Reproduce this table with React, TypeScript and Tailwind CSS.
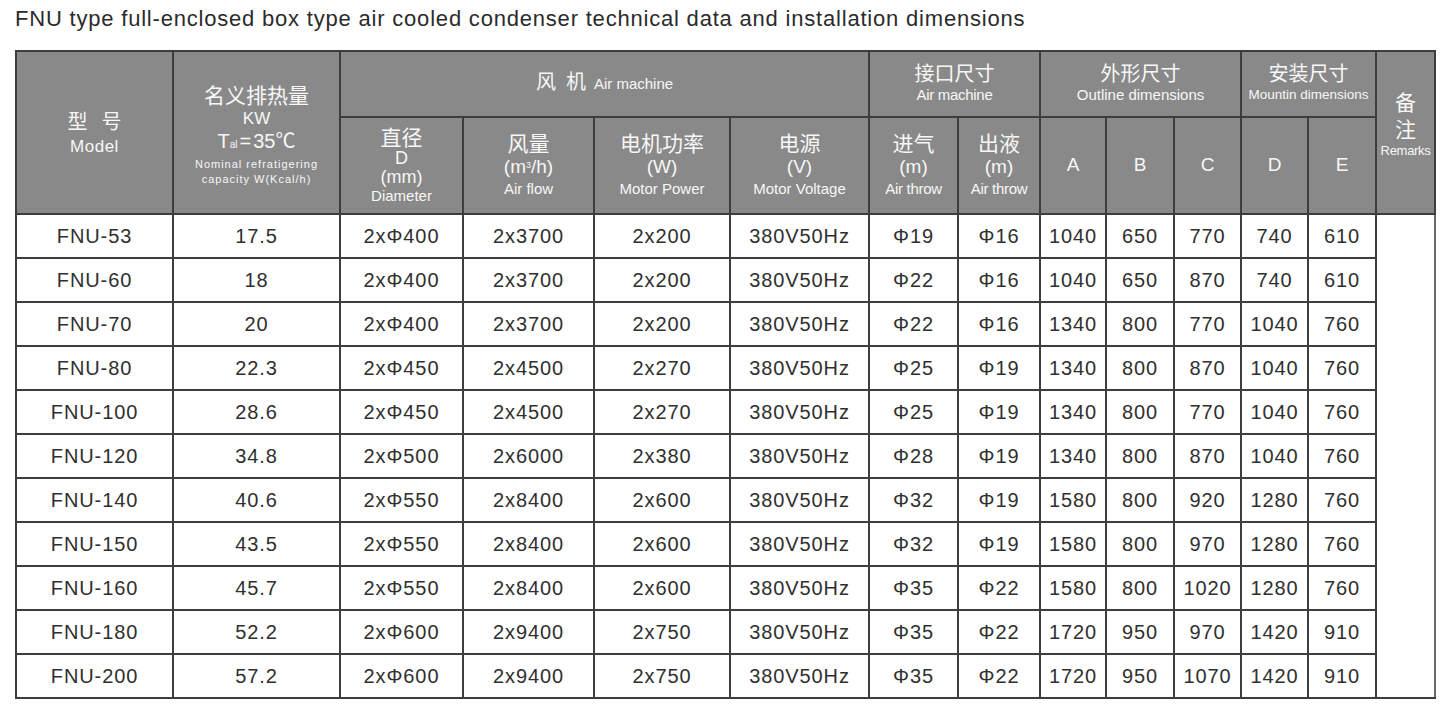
const ROWS: string[][] = [
  ["FNU-53", "17.5", "2xΦ400", "2x3700", "2x200", "380V50Hz", "Φ19", "Φ16", "1040", "650", "770", "740", "610"],
  ["FNU-60", "18", "2xΦ400", "2x3700", "2x200", "380V50Hz", "Φ22", "Φ16", "1040", "650", "870", "740", "610"],
  ["FNU-70", "20", "2xΦ400", "2x3700", "2x200", "380V50Hz", "Φ22", "Φ16", "1340", "800", "770", "1040", "760"],
  ["FNU-80", "22.3", "2xΦ450", "2x4500", "2x270", "380V50Hz", "Φ25", "Φ19", "1340", "800", "870", "1040", "760"],
  ["FNU-100", "28.6", "2xΦ450", "2x4500", "2x270", "380V50Hz", "Φ25", "Φ19", "1340", "800", "770", "1040", "760"],
  ["FNU-120", "34.8", "2xΦ500", "2x6000", "2x380", "380V50Hz", "Φ28", "Φ19", "1340", "800", "870", "1040", "760"],
  ["FNU-140", "40.6", "2xΦ550", "2x8400", "2x600", "380V50Hz", "Φ32", "Φ19", "1580", "800", "920", "1280", "760"],
  ["FNU-150", "43.5", "2xΦ550", "2x8400", "2x600", "380V50Hz", "Φ32", "Φ19", "1580", "800", "970", "1280", "760"],
  ["FNU-160", "45.7", "2xΦ550", "2x8400", "2x600", "380V50Hz", "Φ35", "Φ22", "1580", "800", "1020", "1280", "760"],
  ["FNU-180", "52.2", "2xΦ600", "2x9400", "2x750", "380V50Hz", "Φ35", "Φ22", "1720", "950", "970", "1420", "910"],
  ["FNU-200", "57.2", "2xΦ600", "2x9400", "2x750", "380V50Hz", "Φ35", "Φ22", "1720", "950", "1070", "1420", "910"],
];

const COLS = [157, 167, 123, 131, 136, 139, 89, 82, 66, 68, 67, 67, 68, 59];

const th = "border-2 border-[#3d3d3d] bg-[#898989] text-[#f7f7f7] font-normal p-0 align-middle text-center";
const td = "border-2 border-[#3d3d3d] h-[44px] p-0 text-center align-middle text-[20px] tracking-[0.9px] text-[#2f2f2f]";
const cjk = "[font-family:'Liberation_Sans','Noto_Sans_CJK_SC',sans-serif]";

function Cn({ children, size = "text-[21px]", lh = "leading-[24px]" }: { children: React.ReactNode; size?: string; lh?: string }) {
  return <div className={`${size} ${lh}`}>{children}</div>;
}

export default function App() {
  return (
    <div className={`min-h-[713px] w-[1454px] bg-white pl-[15px] pt-[8px] ${cjk}`}>
      <div className="text-[22px] leading-[22px] text-[#2b2b2b] tracking-[0.8px]">
        FNU type full-enclosed box type air cooled condenser technical data and installation dimensions
      </div>

      <table className="mt-[20px] w-[1419px] table-fixed border-collapse">
        <colgroup>
          {COLS.map((w, i) => (
            <col key={i} style={{ width: w }} />
          ))}
        </colgroup>
        <thead>
          <tr className="h-[66px]">
            <th rowSpan={2} className={th}>
              <div className="flex justify-center gap-[14px] text-[20px] leading-[29px]">
                <span>型</span>
                <span>号</span>
              </div>
              <div className="text-[17px] leading-[20px] tracking-[0.5px]">Model</div>
            </th>
            <th rowSpan={2} className={th}>
              <div className="pt-[4px]">
                <div className="text-[21px] leading-[26px]">名义排热量</div>
                <div className="text-[17px] leading-[20px]">KW</div>
                <div className="text-[20px] leading-[25px]">
                  T<span className="text-[10px]">al</span>
                  <span className="mx-[2px]">=</span>35℃
                </div>
                <div className="text-[11px] leading-[15px] tracking-[1px]">Nominal refratigering</div>
                <div className="text-[11px] leading-[15px] tracking-[1px]">capacity W(Kcal/h)</div>
              </div>
            </th>
            <th colSpan={4} className={th}>
              <div className="flex items-baseline justify-center gap-[8px] pb-[4px]">
                <span className="flex gap-[10px] text-[20px]">
                  <span>风</span>
                  <span>机</span>
                </span>
                <span className="text-[15px]">Air machine</span>
              </div>
            </th>
            <th colSpan={2} className={th}>
              <Cn size="text-[20px]" lh="leading-[22px]">接口尺寸</Cn>
              <div className="text-[15px] leading-[20px] tracking-[-0.3px]">Air machine</div>
            </th>
            <th colSpan={3} className={th}>
              <Cn size="text-[20px]" lh="leading-[22px]">外形尺寸</Cn>
              <div className="text-[15px] leading-[20px]">Outline dimensions</div>
            </th>
            <th colSpan={2} className={th}>
              <Cn size="text-[20px]" lh="leading-[22px]">安装尺寸</Cn>
              <div className="text-[13.5px] leading-[20px]">Mountin dimensions</div>
            </th>
            <th rowSpan={2} className={th}>
              <div className="pb-[18px]">
                <Cn size="text-[21px]" lh="leading-[31px]">备</Cn>
                <Cn size="text-[21px]" lh="leading-[24px]">注</Cn>
                <div className="text-[13px] leading-[18px] tracking-[-0.3px]">Remarks</div>
              </div>
            </th>
          </tr>
          <tr className="h-[97px]">
            <th className={th}>
              <Cn lh="leading-[22px]">直径</Cn>
              <div className="text-[18px] leading-[19px]">D</div>
              <div className="text-[18px] leading-[19px]">(mm)</div>
              <div className="text-[15px] leading-[18px]">Diameter</div>
            </th>
            <th className={th}>
              <Cn>风量</Cn>
              <div className="text-[19px] leading-[22px]">
                (m<sup className="text-[9px]">3</sup>/h)
              </div>
              <div className="text-[15px] leading-[22px]">Air flow</div>
            </th>
            <th className={th}>
              <Cn>电机功率</Cn>
              <div className="text-[19px] leading-[22px]">(W)</div>
              <div className="text-[15px] leading-[22px]">Motor Power</div>
            </th>
            <th className={th}>
              <Cn>电源</Cn>
              <div className="text-[19px] leading-[22px]">(V)</div>
              <div className="text-[15px] leading-[22px]">Motor Voltage</div>
            </th>
            <th className={th}>
              <Cn>进气</Cn>
              <div className="text-[19px] leading-[22px]">(m)</div>
              <div className="text-[15px] leading-[22px] tracking-[-0.3px]">Air throw</div>
            </th>
            <th className={th}>
              <Cn>出液</Cn>
              <div className="text-[19px] leading-[22px]">(m)</div>
              <div className="text-[15px] leading-[22px] tracking-[-0.3px]">Air throw</div>
            </th>
            {["A", "B", "C", "D", "E"].map((l) => (
              <th key={l} className={`${th} text-[19px]`}>
                {l}
              </th>
            ))}
          </tr>
        </thead>
        <tbody>
          {ROWS.map((r, i) => (
            <tr key={r[0]}>
              {r.map((v, j) => (
                <td key={j} className={td}>
                  {v}
                </td>
              ))}
              {i === 0 && (
                <td rowSpan={ROWS.length} className="border-2 border-[#3d3d3d] border-r-[#6a6a6a] p-0" />
              )}
            </tr>
          ))}
        </tbody>
      </table>
    </div>
  );
}
